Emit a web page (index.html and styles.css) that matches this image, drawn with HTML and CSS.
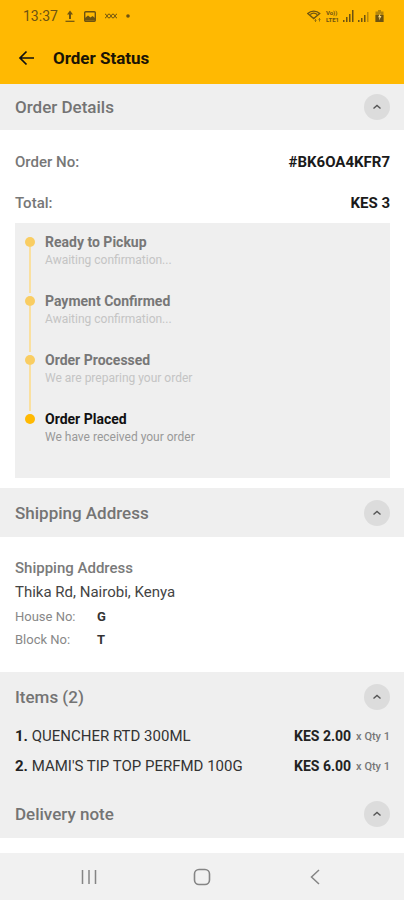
FILE: index.html
```html
<!DOCTYPE html>
<html lang="en">
<head>
<meta charset="utf-8">
<meta name="viewport" content="width=device-width, initial-scale=1">
<title>Order Status</title>
<link rel="stylesheet" href="styles.css">
</head>
<body>
<svg class="defs" aria-hidden="true">
  <symbol id="up" viewBox="0 0 26 26"><path d="M9.500 14.500 13 11.500l3.500 3" fill="none" stroke="#555" stroke-width="1.400"/></symbol>
</svg>
<header class="top">
  <div class="status">
    <div class="status-left">
      <span class="clock">13:37</span>
      <svg width="10" height="12" viewBox="0 0 10 12" fill="none" stroke="currentColor" stroke-width="2"><path d="M5 9V2"/><path d="M2 4.500 5 .5l3 4z" fill="currentColor" stroke="none"/><path d="M.5 11.300h9" stroke-width="1.200"/></svg>
      <svg width="12" height="11" viewBox="0 0 12 11"><rect x=".7" y=".7" width="10.600" height="9.600" rx="1" fill="none" stroke="currentColor" stroke-width="1.400"/><path d="M1 9.500V7l3-2.500 2.500 2L8.500 5 11 7v2.500z" fill="currentColor"/></svg>
      <svg width="12" height="6" viewBox="0 0 12 6" fill="none" stroke="currentColor"><path d="M0 1c2 0 2 4 4 4s2-4 4-4 2 4 4 4M0 5c2 0 2-4 4-4s2 4 4 4 2-4 4-4"/></svg>
      <svg width="4" height="4" viewBox="0 0 4 4"><circle cx="2" cy="2" r="1.800" fill="currentColor"/></svg>
    </div>
    <div class="status-right">
      <svg width="15" height="12" viewBox="0 0 15 12" fill="none" stroke="currentColor" stroke-width="1.400"><path d="M.8 3.500C4 .3 9.500.3 12.700 3.500L6.700 8.500z"/><path d="M3.200 4.500c2-1.600 5-1.600 7 0"/><path d="M8.500 9v2.500M7.500 10.500l1 1 1-1M12.500 11.500V8.500M11.500 9.500l1-1 1 1" stroke-width=".7"/></svg>
      <span class="lte"><span>Vo))</span><span>LTE1</span></span>
      <svg width="11" height="12" viewBox="0 0 11 12" fill="currentColor"><path d="M0 10h1.500v2H0zM3 7h1.500v5H3zM6 4h1.500v8H6zM9 0h1.500v12H9z"/></svg>
      <svg width="11" height="12" viewBox="0 0 11 12" fill="currentColor"><path d="M0 10h1.500v2H0zM3 8h1.500v4H3zM6 5h1.500v7H6z"/><path d="M9 2h1.500v10H9z" opacity=".45"/></svg>
      <svg class="battery" width="9" height="12" viewBox="0 0 9 12"><path d="M3 0h3v1.500h2.500v10.500h-8V1.500H3z" fill="currentColor" opacity=".5"/><path d="M.5 5h8v7h-8z" fill="currentColor"/><path d="M5.500 3 3 7.300h1.500L4 10.500 6.500 6H5z" fill="#ffd978"/></svg>
    </div>
  </div>
  <div class="appbar">
    <button class="back" aria-label="Back"><svg width="18" height="18" viewBox="0 0 18 18" fill="none" stroke="#111" stroke-width="1.700"><path d="M16 9H2.500M8.500 2.500 2 9l6.500 6.500"/></svg></button>
    <h1>Order Status</h1>
  </div>
</header>
<main>
  <section>
    <div class="head first"><h2>Order Details</h2><button class="toggle" aria-label="Collapse order details"><svg><use href="#up"/></svg></button></div>
    <div class="details">
      <dl class="facts">
        <div><dt>Order No:</dt><dd>#BK6OA4KFR7</dd></div>
        <div><dt>Total:</dt><dd>KES 3</dd></div>
      </dl>
      <ol class="timeline">
        <li><h3>Ready to Pickup</h3><p>Awaiting confirmation...</p></li>
        <li><h3>Payment Confirmed</h3><p>Awaiting confirmation...</p></li>
        <li><h3>Order Processed</h3><p>We are preparing your order</p></li>
        <li class="current"><h3>Order Placed</h3><p>We have received your order</p></li>
      </ol>
    </div>
  </section>
  <section>
    <div class="head"><h2>Shipping Address</h2><button class="toggle" aria-label="Collapse shipping address"><svg><use href="#up"/></svg></button></div>
    <div class="address">
      <h3>Shipping Address</h3>
      <p>Thika Rd, Nairobi, Kenya</p>
      <dl>
        <div><dt>House No:</dt><dd>G</dd></div>
        <div><dt>Block No:</dt><dd>T</dd></div>
      </dl>
    </div>
  </section>
  <section class="items">
    <div class="head"><h2>Items (2)</h2><button class="toggle" aria-label="Collapse items"><svg><use href="#up"/></svg></button></div>
    <ul>
      <li><span><b>1.</b> QUENCHER RTD 300ML</span><span class="price"><b>KES 2.00</b><small>x Qty 1</small></span></li>
      <li><span><b>2.</b> MAMI'S TIP TOP PERFMD 100G</span><span class="price"><b>KES 6.00</b><small>x Qty 1</small></span></li>
    </ul>
  </section>
  <section>
    <div class="head"><h2>Delivery note</h2><button class="toggle" aria-label="Collapse delivery note"><svg><use href="#up"/></svg></button></div>
  </section>
</main>
<nav class="sysnav">
  <button aria-label="Recent apps"><svg width="18" height="18" viewBox="0 0 18 18" stroke="#858585" stroke-width="1.500"><path d="M2.500 2v14M9 2v14M15.500 2v14"/></svg></button>
  <button aria-label="Home"><svg width="18" height="18" viewBox="0 0 18 18" fill="none" stroke="#858585" stroke-width="1.600"><rect x="1.500" y="1.500" width="15" height="15" rx="4.500"/></svg></button>
  <button aria-label="Back"><svg width="18" height="18" viewBox="0 0 18 18" fill="none" stroke="#858585" stroke-width="1.500"><path d="M13 2 5.500 9 13 16"/></svg></button>
</nav>
</body>
</html>
```
FILE: styles.css
```css
* { box-sizing: border-box; margin: 0; padding: 0; }
body {
  min-height: 100vh;
  display: flex;
  flex-direction: column;
  background: #fff;
  color: #222;
  font-family: Roboto, "Liberation Sans", sans-serif;
  font-size: 15px;
}
ul, ol { list-style: none; }
button { border: 0; background: none; display: flex; align-items: center; justify-content: center; cursor: pointer; }
svg { display: block; }
.defs { width: 0; height: 0; position: absolute; }

.top { background: #ffb902; }
.status {
  height: 32px;
  padding: 0 20px 0 23px;
  display: flex;
  justify-content: space-between;
  align-items: center;
  color: #6d5312;
}
.status-left, .status-right { display: flex; align-items: center; }
.status-left { gap: 9px; }
.status-right { gap: 4px; }
.clock { font-size: 14px; margin-right: -2px; }
.lte { display: flex; flex-direction: column; font-size: 6px; line-height: 7px; font-weight: 700; }
.battery { margin-left: 2px; }
.appbar { height: 52px; padding: 0 18px; display: flex; align-items: center; gap: 17px; }
.back { width: 18px; height: 18px; }
h1 { font-size: 17px; font-weight: 700; color: #1a1405; }

.head {
  height: 49px;
  padding: 0 14px 0 15px;
  display: flex;
  align-items: center;
  justify-content: space-between;
  background: #efefef;
}
.head.first { height: 46px; }
h2 { font-size: 17px; font-weight: 500; color: #747474; }
.toggle { width: 26px; height: 26px; border-radius: 50%; background: #dcdcdc; }
.toggle svg { width: 26px; height: 26px; }

.details { padding: 11px 14px 10px 15px; }
.facts div { height: 41px; display: flex; align-items: center; justify-content: space-between; }
.facts dt { font-weight: 500; color: #777; }
.facts dd { font-weight: 700; color: #1a1a1a; }
.timeline { background: #efefef; padding: 9px 10px 10px; }
.timeline li { position: relative; height: 59px; padding-left: 20px; }
.timeline h3 { font-size: 14px; line-height: 20px; font-weight: 700; color: #777; }
.timeline p { font-size: 12px; line-height: 17px; color: #c4c4c4; }
.timeline li::before {
  content: "";
  position: absolute;
  left: 0;
  top: 5px;
  width: 10px;
  height: 10px;
  border-radius: 50%;
  background: #f9cd62;
}
.timeline li:not(.current)::after {
  content: "";
  position: absolute;
  left: 4px;
  top: 15px;
  bottom: -2px;
  width: 2px;
  background: #fae0a0;
}
.timeline .current::before { background: #ffb902; }
.timeline .current h3 { color: #111; }
.timeline .current p { color: #999; }

.address { padding: 20px 15px; }
.address h3 { font-size: 15px; line-height: 23px; font-weight: 500; color: #7a7a7a; }
.address p { line-height: 25px; color: #444; }
.address dl { font-size: 13px; line-height: 23px; padding-bottom: 1px; }
.address dl div { display: flex; }
.address dt { width: 82px; color: #888; }
.address dd { font-weight: 700; color: #333; }

.items { background: #efefef; }
.items ul { padding: 0 14px 8px 15px; }
.items li { height: 30px; display: flex; align-items: center; justify-content: space-between; color: #333; }
.items b { font-weight: 700; color: #222; }
.price { display: flex; align-items: center; gap: 5px; font-size: 14px; }
.price small { font-size: 11px; font-weight: 500; color: #777; }

.sysnav {
  margin-top: auto;
  height: 47px;
  padding: 0 33px;
  display: flex;
  align-items: center;
  background: #f1f1f1;
}
.sysnav button { flex: 1; height: 47px; }
```
